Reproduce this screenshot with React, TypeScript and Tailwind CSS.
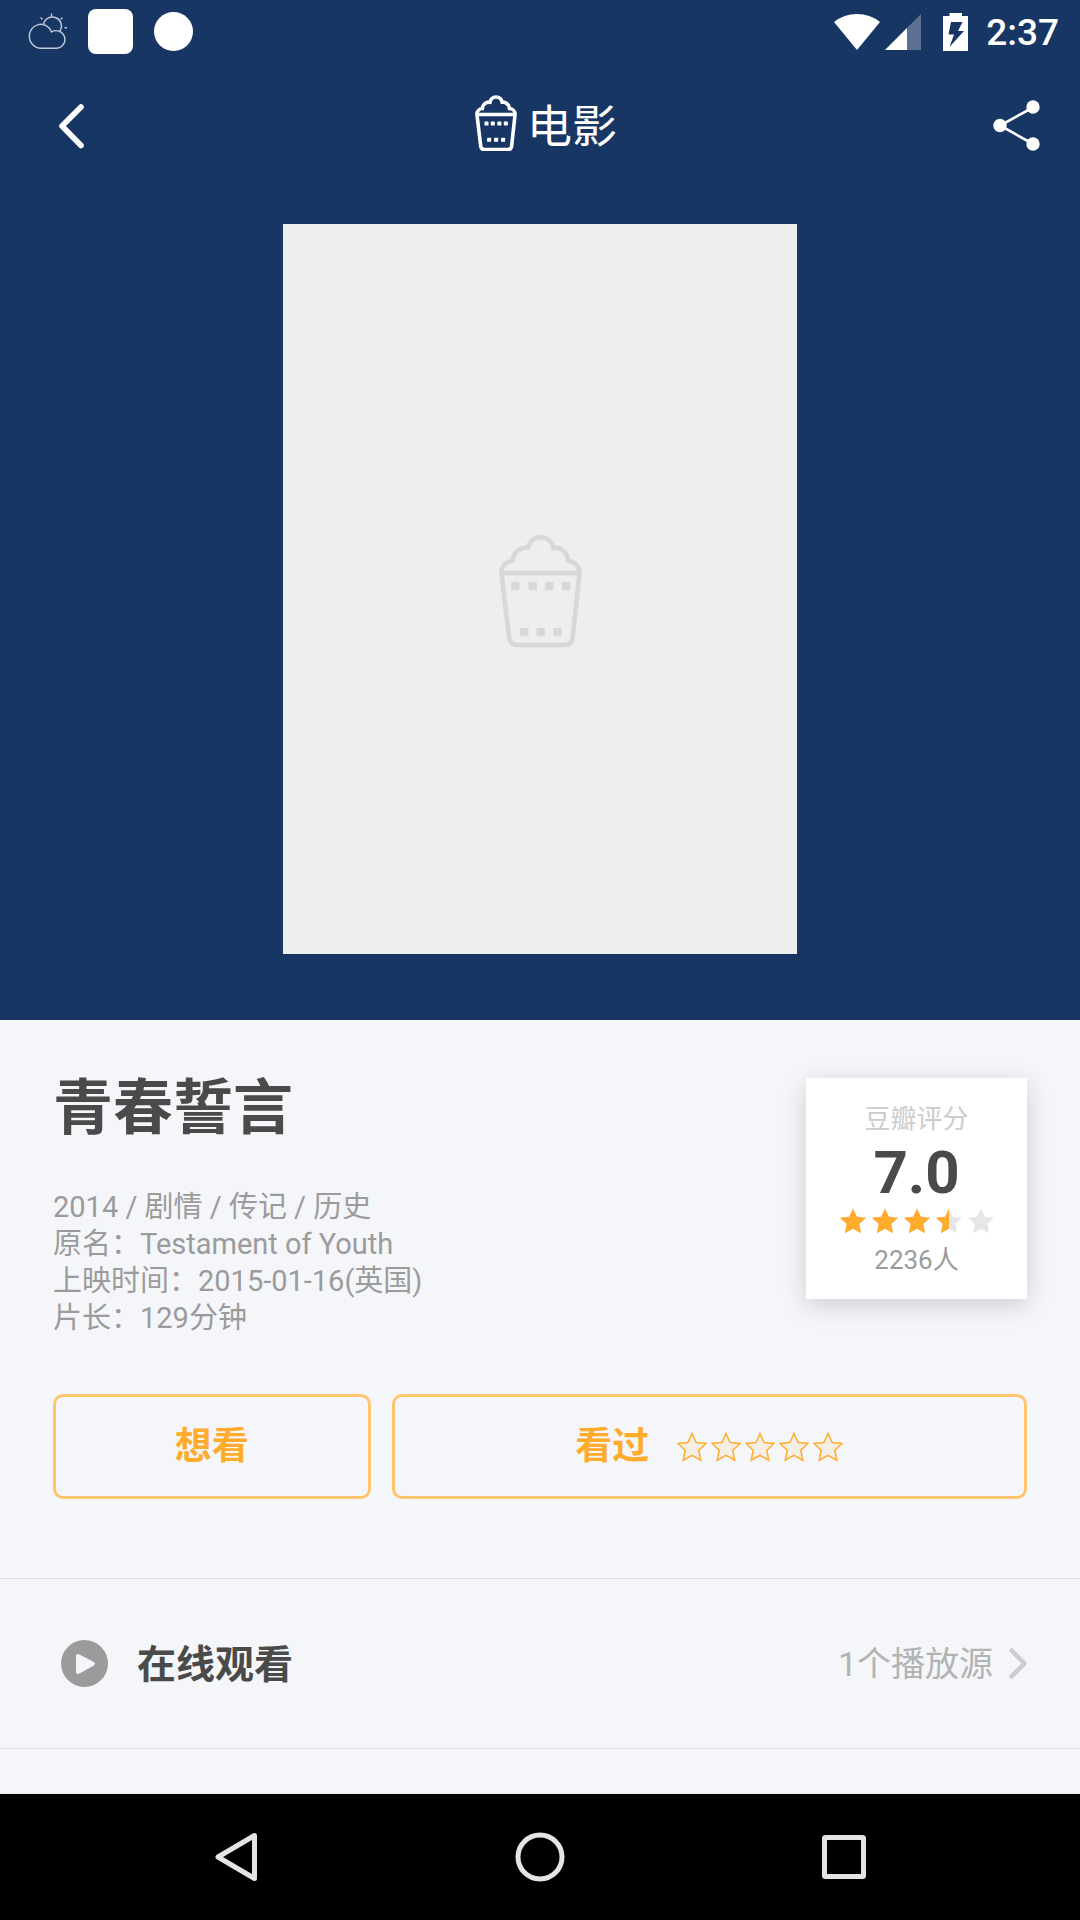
import React from "react";

const STAR = "M12 1.2 15.3 8.4 23.2 9.2 17.4 14.6 19 22.6 12 18.7 5 22.6 6.6 14.6.8 9.2 8.7 8.4Z";

type Dots = { top: number[]; topY: number; bottom: number[]; bottomY: number };

const LARGE_DOTS: Dots = { top: [131, 183, 233, 283], topY: 228, bottom: [158, 207, 257], bottomY: 367 };
const SMALL_DOTS: Dots = { top: [148, 187, 227, 267], topY: 245, bottom: [164, 207, 250], bottomY: 345 };

function Popcorn({ className, stroke, dots }: { className: string; stroke: number; dots: Dots }) {
  return (
    <svg viewBox="80 64 254 350" className={className} fill="none" stroke="currentColor" strokeWidth={stroke} aria-hidden="true">
      <path d="M90 190A36 36 0 0 1 123 153A42 42 0 0 1 170 114A38 38 0 0 1 245 114A42 42 0 0 1 290 153A36 36 0 0 1 324 190L303 383Q300 405 280 405H136Q116 405 113 383Z" />
      <path d="M90 190H324" />
      <g fill="currentColor" stroke="none">
        {dots.top.map((x) => (
          <rect key={x} x={x - 12} y={dots.topY - 12} width="25" height="25" rx="3" />
        ))}
        {dots.bottom.map((x) => (
          <rect key={x} x={x - 12} y={dots.bottomY - 13} width="25" height="25" rx="3" />
        ))}
      </g>
    </svg>
  );
}

function StatusBar() {
  return (
    <div className="flex h-[63px] items-center justify-between pr-[21px] pl-7">
      <div className="flex items-center">
        <svg viewBox="0 0 39 37" className="h-[37px] w-[39px]" fill="none" stroke="#c3cad8" strokeWidth="1.4" strokeLinecap="round" aria-hidden="true">
          <path d="M12 35.3A11.500 12 0 1 1 23.500 19A8.800 8.800 0 1 1 27.500 35.3Z" />
          <path d="M15.500 11.500A9 9 0 1 1 31.500 18.500" />
          <path d="M23.500 1V3M13 5 14 6M34 5 33 6M37 14.7H38.500" />
        </svg>
        <div className="ml-[21px] size-[45px] rounded-lg bg-white" />
        <div className="ml-[21px] size-[39px] rounded-full bg-white" />
      </div>
      <div className="flex items-center text-white">
        <svg viewBox="0 0 46 36" className="h-9 w-[46px]" fill="currentColor" aria-hidden="true">
          <path d="M23 36 0 8Q10 0 23 0T46 8Z" />
        </svg>
        <svg viewBox="0 0 36 36" className="ml-[5px] size-9" fill="currentColor" aria-hidden="true">
          <path d="M36 0V36H0Z" opacity=".3" />
          <path d="M22 14V36H0Z" />
        </svg>
        <svg viewBox="0 0 25 38" className="ml-[22px] h-[38px] w-[25px]" fill="currentColor" aria-hidden="true">
          <path fillRule="evenodd" d="M6.500 0H19V3H25V38H0V3H6.500ZM8 9 5.500 21.500H11L6.500 34 21 18H15L19.500 9Z" />
        </svg>
        <time className="ml-[18px] pt-0.5 text-[37px] leading-[44px] font-medium">2:37</time>
      </div>
    </div>
  );
}

function TitleBar() {
  return (
    <header className="grid h-[126px] grid-cols-[1fr_auto_1fr] items-center px-[38px] text-white">
      <button type="button" aria-label="返回" className="justify-self-start p-[18px]">
        <svg viewBox="0 0 31 48" className="h-12 w-[31px]" fill="none" stroke="currentColor" strokeWidth="5.600" strokeLinecap="round" strokeLinejoin="round" aria-hidden="true">
          <path d="M25 5 6 24 25 43.500" />
        </svg>
      </button>
      <h1 className="flex items-start gap-2.5 pl-3 text-[45px] leading-[60px]">
        <Popcorn className="h-[57px] w-[42px]" stroke={22} dots={SMALL_DOTS} />
        <span className="pt-1">电影</span>
      </h1>
      <button type="button" aria-label="分享" className="justify-self-end">
        <svg viewBox="0 0 52 54" className="h-[54px] w-[52px]" fill="currentColor" aria-hidden="true">
          <path d="M43 8.500 10 26.500 43 45" fill="none" stroke="currentColor" strokeWidth="2.600" />
          <circle cx="10" cy="26.500" r="6.700" />
          <circle cx="43" cy="8" r="6.700" />
          <circle cx="43" cy="45" r="6.700" />
        </svg>
      </button>
    </header>
  );
}

function RatingStar({ fill }: { fill: number }) {
  return (
    <svg viewBox="0 0 24 24" className="size-7" aria-hidden="true">
      <defs>
        <clipPath id="half-star">
          <rect width="12" height="24" />
        </clipPath>
      </defs>
      <path d={STAR} fill="#e6e6e6" />
      {fill > 0 && <path d={STAR} fill="#ffac2d" clipPath={fill < 1 ? "url(#half-star)" : undefined} />}
    </svg>
  );
}

function ScoreCard() {
  return (
    <aside className="flex size-[221px] flex-col items-center bg-white pt-[21px] shadow-[0_6px_24px_rgba(0,0,0,0.16)]">
      <p className="text-[26px] leading-10 text-[#cccccc]">豆瓣评分</p>
      <p className="text-[60px] leading-[68px] font-bold text-[#4a4a4a]">7.0</p>
      <div role="img" aria-label="3.5 / 5" className="flex gap-1">
        {[1, 1, 1, 0.5, 0].map((fill, i) => (
          <RatingStar key={i} fill={fill} />
        ))}
      </div>
      <p className="mt-[5px] text-[26px] leading-10 text-[#9b9b9b]">2236人</p>
    </aside>
  );
}

const INFO = [
  "2014 / 剧情 / 传记 / 历史",
  "原名：Testament of Youth",
  "上映时间：2015-01-16(英国)",
  "片长：129分钟",
];

function Actions() {
  return (
    <div className="mt-[57px] grid grid-cols-[1fr_2fr] gap-[21px] text-[37px] leading-[50px] font-bold text-[#ffac2d]">
      <button type="button" className="h-[105px] rounded-[10px] border-3 border-[#ffc56c]">
        想看
      </button>
      <button type="button" className="flex h-[105px] items-center justify-center gap-7 rounded-[10px] border-3 border-[#ffc56c]">
        看过
        <span className="flex gap-1">
          {[0, 1, 2, 3, 4].map((i) => (
            <svg key={i} viewBox="0 0 24 24" className="size-[30px]" fill="#f5eee4" stroke="#ffac2d" strokeWidth="1.200" aria-hidden="true">
              <path d={STAR} />
            </svg>
          ))}
        </span>
      </button>
    </div>
  );
}

function WatchRow() {
  return (
    <a href="#sources" className="mt-[79px] flex h-[171px] items-center border-y border-[#e0e1e4] pr-[53px] pl-[61px]">
      <svg viewBox="0 0 47 47" className="size-[47px]" aria-hidden="true">
        <circle cx="23.500" cy="23.500" r="23.500" fill="#9b9b9b" />
        <path d="M17 16 32 23.700 17 32Z" fill="#f4f6fa" stroke="#f4f6fa" strokeWidth="4" strokeLinejoin="round" />
      </svg>
      <span className="ml-[29px] pt-0.5 text-[39px] leading-[52px] font-bold text-[#4a4a4a]">在线观看</span>
      <span className="ml-auto text-[34px] leading-[46px] text-[#b3b3b3]">1个播放源</span>
      <svg viewBox="0 0 18 31" className="ml-4 h-[31px] w-[18px]" fill="none" stroke="#cccccc" strokeWidth="4.500" strokeLinecap="round" strokeLinejoin="round" aria-hidden="true">
        <path d="M2.500 2.500 15.500 15.500 2.500 28.500" />
      </svg>
    </a>
  );
}

function NavBar() {
  return (
    <nav className="grid h-[126px] grid-cols-3 items-center justify-items-center bg-black px-[84px] text-[#e4e4e4]">
      {[
        { label: "后退", shape: <path d="M43.500 3.500V46.500L7 25Z" /> },
        { label: "主屏幕", shape: <circle cx="25" cy="25" r="22" /> },
        { label: "最近任务", shape: <rect x="5.500" y="5.500" width="39" height="39" rx="1" /> },
      ].map(({ label, shape }) => (
        <button key={label} type="button" aria-label={label}>
          <svg viewBox="0 0 50 50" className="size-[50px]" fill="none" stroke="currentColor" strokeWidth="5" strokeLinejoin="round" aria-hidden="true">
            {shape}
          </svg>
        </button>
      ))}
    </nav>
  );
}

export default function App() {
  return (
    <div className="flex min-h-screen flex-col bg-[#f4f6fa] font-[Roboto,'Noto_Sans_CJK_SC',sans-serif]">
      <div className="bg-[#183664] pb-[66px]">
        <StatusBar />
        <TitleBar />
        <div className="mx-auto mt-[35px] flex aspect-[514/730] w-[514px] items-center justify-center bg-[#eeeeee] text-[#d8d8d8]">
          <Popcorn className="h-[117px] w-[85px]" stroke={14} dots={LARGE_DOTS} />
        </div>
      </div>
      <main className="flex-1">
        <div className="px-[53px] pt-[58px]">
          <div className="flex items-start justify-between">
            <div>
              <h2 className="text-[60px] leading-[62px] font-bold text-[#4a4a4a]">青春誓言</h2>
              <div className="mt-[49px] text-[29px] leading-[37px] text-[#9b9b9b]">
                {INFO.map((line) => (
                  <p key={line}>{line}</p>
                ))}
              </div>
            </div>
            <ScoreCard />
          </div>
          <Actions />
        </div>
        <WatchRow />
      </main>
      <NavBar />
    </div>
  );
}
